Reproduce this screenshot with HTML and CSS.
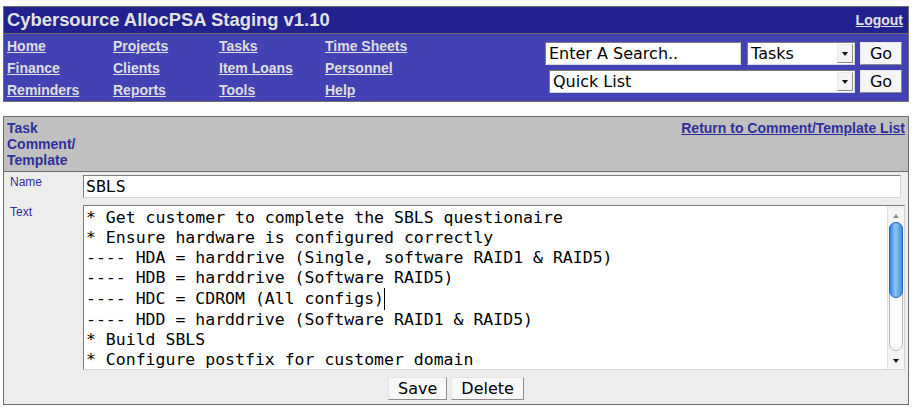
FILE: index.html
```html
<!DOCTYPE html>
<html>
<head>
<meta charset="utf-8">
<title>AllocPSA</title>
<link rel="stylesheet" href="styles.css">
</head>
<body>
<div class="banner">
  <div class="titlebar">
    <span class="title">Cybersource AllocPSA Staging v1.10</span>
    <a class="logout" href="#">Logout</a>
  </div>
  <div class="navbar">
    <nav class="navgrid">
      <a href="#">Home</a><a href="#">Projects</a><a href="#">Tasks</a><a href="#">Time Sheets</a>
      <a href="#">Finance</a><a href="#">Clients</a><a href="#">Item Loans</a><a href="#">Personnel</a>
      <a href="#">Reminders</a><a href="#">Reports</a><a href="#">Tools</a><a href="#">Help</a>
    </nav>
    <div class="search">
      <div class="srow">
        <div class="field search-input">Enter A Search..</div>
        <div class="field select sel-tasks"><span class="sel-text">Tasks</span><span class="arrow"><span class="tri"></span></span></div>
        <button class="go">Go</button>
      </div>
      <div class="srow">
        <div class="field select sel-quick"><span class="sel-text">Quick List</span><span class="arrow"><span class="tri"></span></span></div>
        <button class="go">Go</button>
      </div>
    </div>
  </div>
</div>

<div class="panel">
  <div class="panel-head">
    <div class="heading">Task<br>Comment/<br>Template</div>
    <a class="return" href="#">Return to Comment/Template List</a>
  </div>
  <div class="panel-body">
    <div class="row">
      <div class="label">Name</div>
      <div class="name-input mono">SBLS</div>
    </div>
    <div class="row row-text">
      <div class="label">Text</div>
      <div class="textarea">
        <div class="ta-content mono">* Get customer to complete the SBLS questionaire
* Ensure hardware is configured correctly
---- HDA = harddrive (Single, software RAID1 &amp; RAID5)
---- HDB = harddrive (Software RAID5)
---- HDC = CDROM (All configs)<span class="caret"></span>
---- HDD = harddrive (Software RAID1 &amp; RAID5)
* Build SBLS
* Configure postfix for customer domain</div>
        <div class="scrollbar">
          <svg width="16" height="163" viewBox="0 0 16 163">
            <defs>
              <linearGradient id="thumb" x1="0" y1="0" x2="1" y2="0">
                <stop offset="0" stop-color="#2f7fd8"/>
                <stop offset="0.45" stop-color="#8cc4f4"/>
                <stop offset="1" stop-color="#3d8ae0"/>
              </linearGradient>
            </defs>
            <path d="M8 8 L11 12 L5 12 Z" fill="#8a8a8a"/>
            <rect x="1.5" y="16.5" width="13" height="128" rx="6.5" fill="#fbfbfb" stroke="#b8b8b8"/>
            <rect x="1.5" y="16.5" width="13" height="75" rx="6.5" fill="url(#thumb)" stroke="#2a64b8"/>
            <path d="M5 153 L11 153 L8 157 Z" fill="#111"/>
          </svg>
        </div>
      </div>
    </div>
    <div class="buttons">
      <button class="btn">Save</button>
      <button class="btn">Delete</button>
    </div>
  </div>
</div>
</body>
</html>
```

FILE: styles.css
```css
* { box-sizing: border-box; }

body {
  margin: 0;
  padding: 6px 3px 0 3px;
  background: #ffffff;
  font-family: "Liberation Sans", Arial, sans-serif;
}

.banner {
  border: 1px solid #6e6e6e;
}

.titlebar {
  display: flex;
  justify-content: space-between;
  align-items: center;
  height: 27px;
  background: #21218f;
  border-bottom: 1px solid #6e6e6e;
  padding: 0 5px 0 3px;
}

.title {
  color: #e2e2e2;
  font-weight: bold;
  font-size: 18.4px;
  line-height: 26px;
}

.logout {
  color: #e2e2e2;
  font-size: 14px;
  font-weight: bold;
}

.navbar {
  display: flex;
  justify-content: space-between;
  height: 67px;
  background: #4242b4;
  padding: 0 6px 0 3px;
}

.navgrid {
  display: grid;
  grid-template-columns: repeat(4, 106px);
  grid-auto-rows: 22px;
  padding-top: 1px;
}

.navgrid a {
  color: #dedede;
  font-weight: bold;
  font-size: 14px;
  line-height: 22px;
  white-space: nowrap;
}

.search {
  display: flex;
  flex-direction: column;
  align-items: flex-end;
  gap: 5px;
  padding-top: 8px;
}

.srow {
  display: flex;
  align-items: center;
  gap: 5px;
}

.field {
  height: 23px;
  background: #ffffff;
  border: 1px solid;
  border-color: #7c7c7c #d6d6d6 #d6d6d6 #7c7c7c;
  font-family: "DejaVu Sans", sans-serif;
  font-size: 16px;
  line-height: 21px;
  color: #000;
  padding: 0 3px;
}

.search-input {
  width: 196px;
  margin-right: 1px;
}

.select {
  display: flex;
  justify-content: space-between;
  align-items: stretch;
  padding: 1px 1px 1px 3px;
}

.sel-text {
  line-height: 19px;
}

.sel-tasks { width: 108px; }
.sel-quick { width: 306px; }

.arrow {
  width: 16px;
  background: #f4f4f4;
  border: 1px solid;
  border-color: #e8e8e8 #8a8a8a #8a8a8a #e8e8e8;
  display: flex;
  align-items: center;
  justify-content: center;
}

.tri {
  width: 0;
  height: 0;
  border-left: 3px solid transparent;
  border-right: 3px solid transparent;
  border-top: 4px solid #111;
}

.go {
  width: 42px;
  height: 23px;
  background: #f6f6f6;
  border: 1px solid;
  border-color: #e6e6e6 #8c8c8c #8c8c8c #e6e6e6;
  font-family: "DejaVu Sans", sans-serif;
  font-size: 16px;
  color: #000;
  padding: 0;
}

.panel {
  margin-top: 14px;
  border: 1px solid #6e6e6e;
}

.panel-head {
  display: flex;
  justify-content: space-between;
  align-items: flex-start;
  background: #c0c0c0;
  border-bottom: 1px solid #6e6e6e;
  padding: 3px 3px 2px 3px;
  height: 55px;
}

.heading {
  color: #2f2f9c;
  font-weight: bold;
  font-size: 14px;
  line-height: 16px;
}

.return {
  color: #2f2f9c;
  font-weight: bold;
  font-size: 14px;
  line-height: 16px;
}

.panel-body {
  background: #ededed;
  padding: 3px 3px 4px 3px;
}

.row {
  display: flex;
  align-items: flex-start;
}

.row-text {
  margin-top: 7px;
}

.label {
  width: 76px;
  flex: none;
  color: #2f2f9c;
  font-size: 12px;
  line-height: 14px;
  padding-left: 3px;
}

.mono {
  font-family: "DejaVu Sans Mono", monospace;
  font-size: 16.5px;
  color: #000;
}

.name-input {
  width: 818px;
  height: 23px;
  background: #fff;
  border: 1px solid;
  border-color: #7c7c7c #d6d6d6 #d6d6d6 #7c7c7c;
  line-height: 21px;
  padding: 0 2px;
}

.textarea {
  flex: 1;
  height: 165px;
  display: flex;
  background: #fff;
  border: 1px solid;
  border-color: #7c7c7c #d6d6d6 #d6d6d6 #7c7c7c;
}

.ta-content {
  flex: 1;
  white-space: pre;
  line-height: 20px;
  padding: 2px 2px 0 2px;
  overflow: hidden;
}

.caret {
  display: inline-block;
  width: 1px;
  height: 22px;
  background: #000;
  vertical-align: -6px;
}

.scrollbar {
  width: 17px;
  flex: none;
  border-left: 1px solid #e2e2e2;
  background: #f4f4f4;
}

.scrollbar svg {
  display: block;
}

.buttons {
  display: flex;
  justify-content: center;
  gap: 4px;
  margin-top: 7px;
}

.btn {
  height: 23px;
  padding: 0 9px;
  background: #f8f8f8;
  border: 1px solid;
  border-color: #e4e4e4 #8c8c8c #8c8c8c #e4e4e4;
  font-family: "DejaVu Sans", sans-serif;
  font-size: 16px;
  line-height: 19px;
  color: #000;
}
```
